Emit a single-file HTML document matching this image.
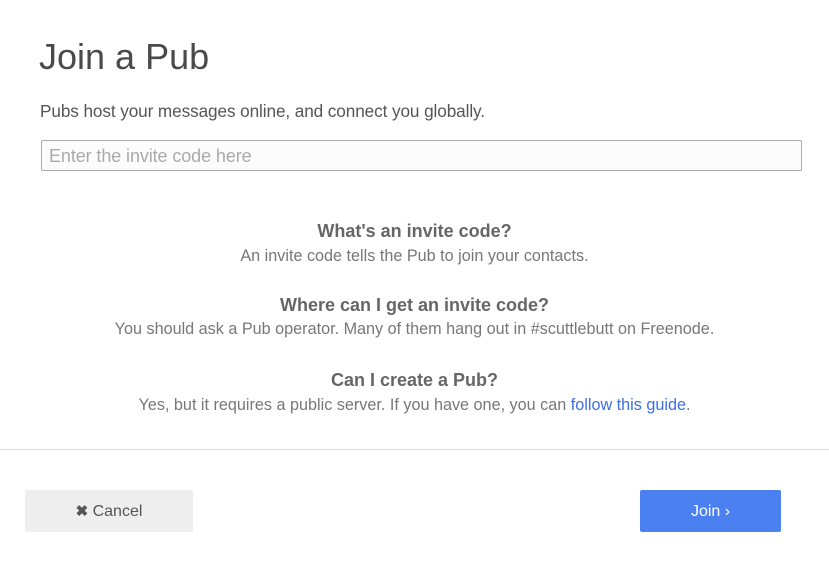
<!DOCTYPE html>
<html><head><style>
body{margin:0;width:829px;height:569px;background:#fff;font-family:"Liberation Sans",sans-serif;position:relative;overflow:hidden;color:#555}
.a{position:absolute}
h1{position:absolute;left:39px;top:35px;margin:0;font-weight:normal;font-size:36px;color:#4a4a4a;line-height:44px}
.sub{left:40px;top:101px;font-size:17.2px;color:#555;letter-spacing:-0.1px}
.inp{left:41px;top:140px;width:761px;height:31px;border:1px solid #aaa;border-radius:2px;background:#fcfcfc;box-sizing:border-box}
.inp span{position:absolute;left:7px;top:5px;font-size:18px;color:#aaa;letter-spacing:-0.1px}
.c{left:0;width:829px;text-align:center}
.h{font-weight:bold;font-size:18px;color:#666}
.t{font-size:16.2px;color:#777}
a{color:#3b6fe0;text-decoration:none}
.hr{left:0;top:449px;width:829px;height:1px;background:#ddd}
.btn{top:490px;height:42px;border-radius:2px;font-size:16px;text-align:center;line-height:44px}
</style></head><body>
<h1>Join a Pub</h1>
<div class="a sub">Pubs host your messages online, and connect you globally.</div>
<div class="a inp"><span>Enter the invite code here</span></div>
<div class="a c h" style="top:221px">What's an invite code?</div>
<div class="a c t" style="top:247px">An invite code tells the Pub to join your contacts.</div>
<div class="a c h" style="top:295px">Where can I get an invite code?</div>
<div class="a c t" style="top:320px">You should ask a Pub operator. Many of them hang out in #scuttlebutt on Freenode.</div>
<div class="a c h" style="top:370px">Can I create a Pub?</div>
<div class="a c t" style="top:396px">Yes, but it requires a public server. If you have one, you can <a>follow this guide</a>.</div>
<div class="a hr"></div>
<div class="a btn" style="left:25px;width:168px;background:#eee;color:#555"><b style="font-size:15px">✖</b> Cancel</div>
<div class="a btn" style="left:640px;width:141px;background:#4a80f0;color:#fff">Join ›</div>
</body></html>
